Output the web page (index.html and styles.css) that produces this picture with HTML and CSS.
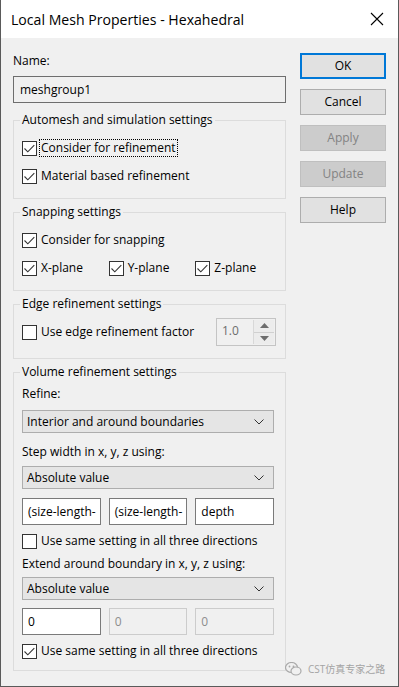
FILE: index.html
```html
<!DOCTYPE html>
<html>
<head>
  <title>Local Mesh Properties - Hexahedral</title>
  <link rel="stylesheet" href="styles.css">
</head>
<body>
  <div class="window">
    <div class="titlebar">
      <span class="title">Local Mesh Properties - Hexahedral</span>
      <svg class="close" width="14" height="14" viewBox="0 0 14 14"><path d="M1 1L13 13M13 1L1 13" stroke="#000" stroke-width="1.1" fill="none"/></svg>
    </div>

    <div class="dialog">
      <div class="main">
        <div class="label name-label">Name:</div>
        <div class="textbox name-box">meshgroup1</div>

        <fieldset class="group g-automesh">
          <legend>Automesh and simulation settings</legend>
          <div class="check row-a"><span class="box"><svg viewBox="0 0 13 13"><path d="M1.5 6.5L4.8 9.8L11.3 3.2"/></svg></span><span class="text focus">Consider for refinement</span></div>
          <div class="check row-b"><span class="box"><svg viewBox="0 0 13 13"><path d="M1.5 6.5L4.8 9.8L11.3 3.2"/></svg></span><span class="text">Material based refinement</span></div>
        </fieldset>

        <fieldset class="group g-snap">
          <legend>Snapping settings</legend>
          <div class="check row-a"><span class="box"><svg viewBox="0 0 13 13"><path d="M1.5 6.5L4.8 9.8L11.3 3.2"/></svg></span><span class="text">Consider for snapping</span></div>
          <div class="triple row-b">
            <div class="check"><span class="box"><svg viewBox="0 0 13 13"><path d="M1.5 6.5L4.8 9.8L11.3 3.2"/></svg></span><span class="text">X-plane</span></div>
            <div class="check"><span class="box"><svg viewBox="0 0 13 13"><path d="M1.5 6.5L4.8 9.8L11.3 3.2"/></svg></span><span class="text">Y-plane</span></div>
            <div class="check"><span class="box"><svg viewBox="0 0 13 13"><path d="M1.5 6.5L4.8 9.8L11.3 3.2"/></svg></span><span class="text">Z-plane</span></div>
          </div>
        </fieldset>

        <fieldset class="group g-edge">
          <legend>Edge refinement settings</legend>
          <div class="edge-row">
            <div class="check"><span class="box"></span><span class="text">Use edge refinement factor</span></div>
            <div class="spin">
              <span class="spin-value">1.0</span>
              <span class="spin-btns">
                <span class="spin-btn"><svg width="9" height="5" viewBox="0 0 9 5"><path d="M0 5L4.5 0L9 5Z" fill="#6d6d6d"/></svg></span>
                <span class="spin-btn"><svg width="9" height="5" viewBox="0 0 9 5"><path d="M0 0L4.5 5L9 0Z" fill="#6d6d6d"/></svg></span>
              </span>
            </div>
          </div>
        </fieldset>

        <fieldset class="group g-volume">
          <legend>Volume refinement settings</legend>
          <div class="label v-refine">Refine:</div>
          <div class="combo v-combo1">Interior and around boundaries<svg class="chev" width="10" height="6" viewBox="0 0 10 6"><path d="M0.5 0.5L5 5L9.5 0.5" fill="none" stroke="#333"/></svg></div>
          <div class="label v-step">Step width in x, y, z using:</div>
          <div class="combo v-combo2">Absolute value<svg class="chev" width="10" height="6" viewBox="0 0 10 6"><path d="M0.5 0.5L5 5L9.5 0.5" fill="none" stroke="#333"/></svg></div>
          <div class="triple v-inputs1">
            <div class="textbox field">(size-length-</div>
            <div class="textbox field">(size-length-</div>
            <div class="textbox field">depth</div>
          </div>
          <div class="check v-same1"><span class="box"></span><span class="text">Use same setting in all three directions</span></div>
          <div class="label v-extend">Extend around boundary in x, y, z using:</div>
          <div class="combo v-combo3">Absolute value<svg class="chev" width="10" height="6" viewBox="0 0 10 6"><path d="M0.5 0.5L5 5L9.5 0.5" fill="none" stroke="#333"/></svg></div>
          <div class="triple v-inputs2">
            <div class="textbox field">0</div>
            <div class="textbox field disabled">0</div>
            <div class="textbox field disabled">0</div>
          </div>
          <div class="check v-same2"><span class="box"><svg viewBox="0 0 13 13"><path d="M1.5 6.5L4.8 9.8L11.3 3.2"/></svg></span><span class="text">Use same setting in all three directions</span></div>
        </fieldset>
      </div>

      <div class="buttons">
        <div class="btn default">OK</div>
        <div class="btn">Cancel</div>
        <div class="btn disabled">Apply</div>
        <div class="btn disabled">Update</div>
        <div class="btn">Help</div>
      </div>
    </div>

    <div class="watermark">
      <svg width="17" height="14" viewBox="0 0 17 14">
        <ellipse cx="6.5" cy="5.5" rx="6" ry="5" fill="none" stroke="#a9a9a9" stroke-width="1.2"/>
        <ellipse cx="11" cy="9" rx="5" ry="4" fill="#f0f0f0" stroke="#a9a9a9" stroke-width="1.2"/>
        <circle cx="4.5" cy="4.5" r="0.9" fill="#a9a9a9"/>
        <circle cx="8.5" cy="4.5" r="0.9" fill="#a9a9a9"/>
      </svg>
      <span>CST仿真专家之路</span>
    </div>
  </div>
</body>
</html>
```

FILE: styles.css
```css
body {
  margin: 0;
  font-family: "Open Sans", "Noto Sans", "Noto Sans CJK SC", sans-serif;
  font-size: 12px;
  color: #000;
}

.window {
  position: relative;
  width: 399px;
  height: 687px;
  box-sizing: border-box;
  background: #f0f0f0;
  border: 1px solid #5a5a5a;
  border-top: none;
}

.titlebar {
  height: 38px;
  background: #fff;
  display: flex;
  align-items: center;
  justify-content: space-between;
  padding: 0 14px 0 10px;
}
.titlebar .title { font-size: 14.1px; }

.dialog {
  display: flex;
  padding: 15px 0 0 12px;
}
.main { width: 273px; }

.label { line-height: 16px; height: 16px; }

.textbox {
  box-sizing: border-box;
  height: 27px;
  border: 1px solid #7a7a7a;
  background: #fff;
  line-height: 25px;
  padding-left: 5px;
  white-space: nowrap;
  overflow: hidden;
}
.name-box {
  margin-top: 7px;
  background: #f0f0f0;
  border-color: #6e6e6e;
  padding-left: 6px;
}

.group {
  margin: 5px 0 0;
  padding: 0 11px 14px 8px;
  border: 1px solid #dcdcdc;
  min-width: 0;
}
.group legend {
  padding: 0 2px;
  margin-left: -2px;
  line-height: 16px;
}
.g-automesh { margin-top: 9px; }
.g-edge { padding-bottom: 12px; }
.g-volume { padding-bottom: 11px; }

.check {
  display: flex;
  align-items: center;
  height: 16px;
  line-height: 16px;
  white-space: nowrap;
}
.check .box {
  box-sizing: border-box;
  width: 15px;
  height: 15px;
  border: 1px solid #333;
  background: #fff;
  margin-right: 4px;
  flex: none;
}
.check .box svg {
  display: block;
  width: 13px;
  height: 13px;
  fill: none;
  stroke: #333;
  stroke-width: 1.1;
}
.check .text.focus {
  outline: 1px dotted #000;
  margin-left: -1px;
  padding: 0 1px 0 1px;
}

.row-a { margin-top: 12px; }
.row-b { margin-top: 12px; }

.triple {
  display: grid;
  grid-template-columns: 1fr 1fr 1fr;
  gap: 8px;
}

.edge-row {
  margin-top: 6px;
  height: 28px;
  display: flex;
  align-items: center;
  justify-content: space-between;
}
.spin {
  box-sizing: border-box;
  width: 60px;
  height: 28px;
  margin-right: -2px;
  border: 1px solid #c4c4c4;
  display: flex;
  justify-content: space-between;
  background: #f0f0f0;
}
.spin-value {
  color: #6d6d6d;
  padding-left: 5px;
  line-height: 24px;
}
.spin-btns {
  display: flex;
  flex-direction: column;
  width: 20px;
  margin: 1px;
  border-left: 1px solid #d8d8d8;
}
.spin-btn {
  flex: 1;
  display: flex;
  align-items: center;
  justify-content: center;
  background: #ececec;
}
.spin-btn + .spin-btn { border-top: 1px solid #d0d0d0; }

.combo {
  box-sizing: border-box;
  height: 23px;
  border: 1px solid #adadad;
  background: #e5e5e5;
  line-height: 21px;
  padding: 0 9px 0 4px;
  display: flex;
  justify-content: space-between;
  align-items: center;
}

.v-refine { margin-top: 6px; }
.v-combo1 { margin-top: 8px; }
.v-step { margin-top: 11px; }
.v-combo2 { margin-top: 6px; }
.v-inputs1 { margin-top: 9px; }
.v-same1 { margin-top: 8px; }
.v-extend { margin-top: 7px; }
.v-combo3 { margin-top: 5px; }
.v-inputs2 { margin-top: 8px; }
.v-same2 { margin-top: 8px; }

.field.disabled {
  background: #f0f0f0;
  border-color: #cccccc;
  color: #8d8d8d;
}

.buttons {
  margin-left: 14px;
  width: 86px;
  display: flex;
  flex-direction: column;
  gap: 10px;
}
.btn {
  box-sizing: border-box;
  height: 26px;
  border: 1px solid #adadad;
  background: #e1e1e1;
  text-align: center;
  line-height: 24px;
}
.btn.default {
  border: 2px solid #0078d7;
  line-height: 22px;
}
.btn.disabled {
  background: #cccccc;
  border-color: #bfbfbf;
  color: #838383;
}

.watermark {
  position: absolute;
  left: 284px;
  top: 661px;
  display: flex;
  align-items: center;
  gap: 6px;
  color: #a4a4a4;
  font-size: 10px;
}
.watermark svg { display: block; }
```
